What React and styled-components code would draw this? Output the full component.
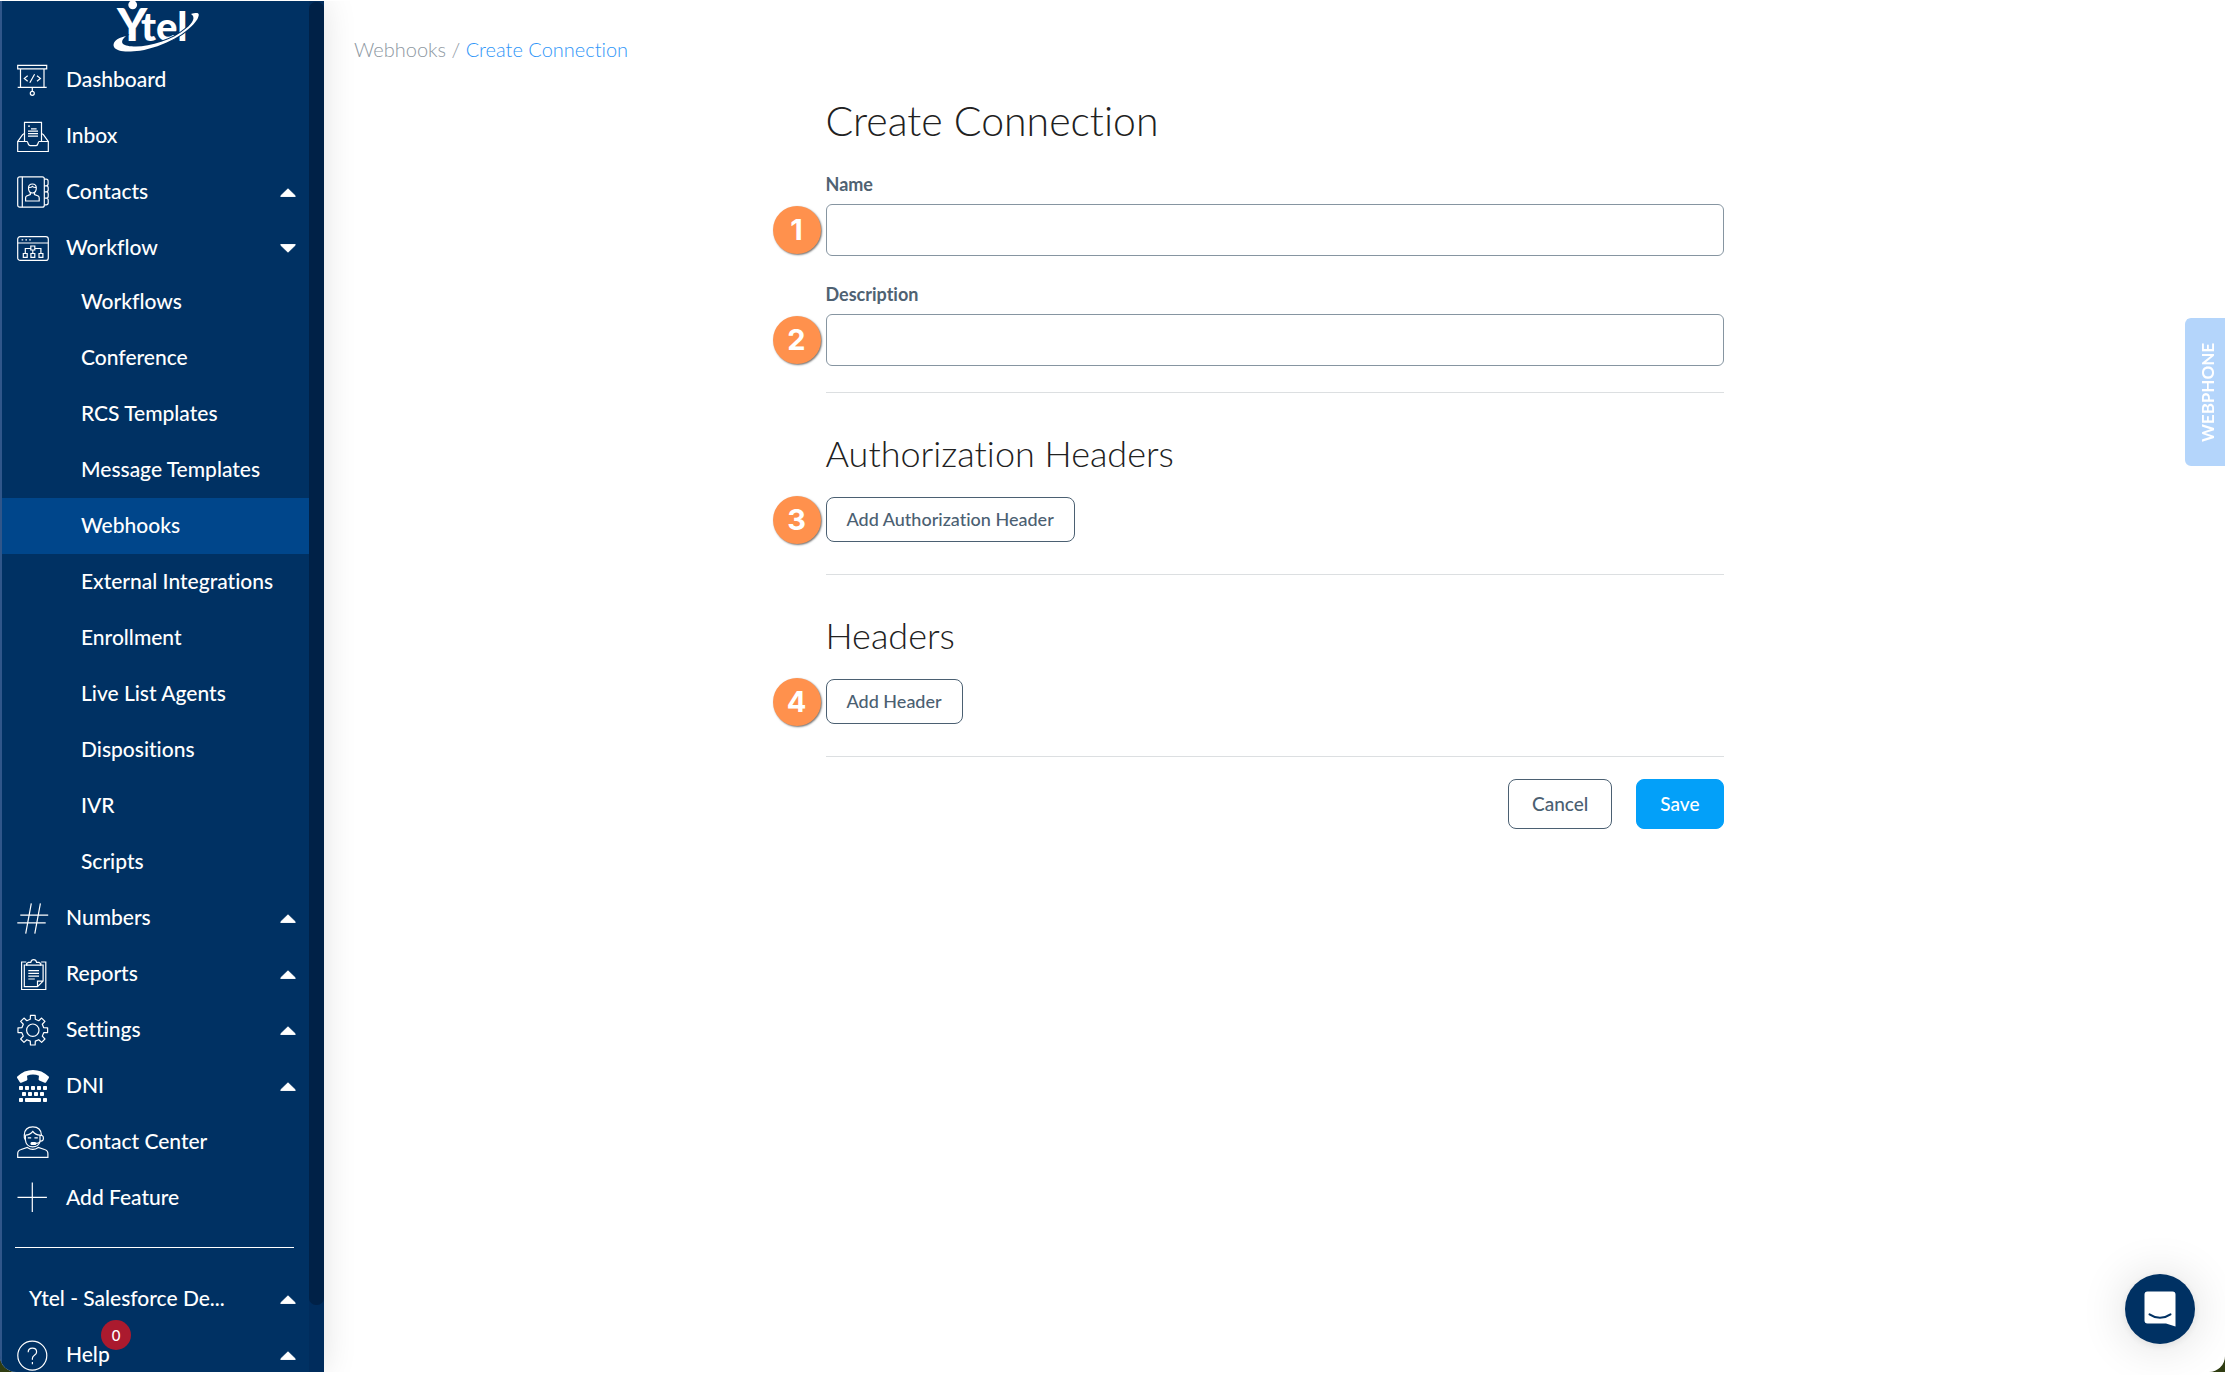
import { FaTty } from "react-icons/fa";
import styled, { createGlobalStyle } from "styled-components";

const GlobalStyle = createGlobalStyle`
  * {
    box-sizing: border-box;
  }

  body {
    margin: 0;
    background: #fff;
    font-family: Lato, "Liberation Sans", sans-serif;
    font-variant-ligatures: none;
  }

  button,
  input {
    font-family: inherit;
    font-variant-ligatures: inherit;
  }
`;

const Page = styled.div`
  height: 100vh;
  padding: 1px 0 3px;
`;

const Backdrop = styled.div`
  height: 100%;
  background: linear-gradient(to bottom, #fff 50%, #2f3d12 50%);
`;

const Window = styled.div`
  display: flex;
  height: 100%;
  overflow: hidden;
  background: #fff;
  border-radius: 0 0 16px 16px;
`;

const Sidebar = styled.aside`
  position: relative;
  z-index: 1;
  display: flex;
  flex: none;
  width: 324px;
  background: #003163;
  box-shadow: 0 0 32px rgba(0, 0, 0, 0.12);
`;

const Menu = styled.nav`
  flex: 1;
  overflow: hidden;
  border-left: 2px solid #30568a;
`;

const ScrollTrack = styled.div`
  width: 15px;
  padding: 1px 0 67px;
  background: #002c5c;
`;

const ScrollThumb = styled.div`
  height: 100%;
  border-radius: 7px;
  background: #002147;
`;

const Logo = styled.svg`
  display: block;
  width: 86px;
  height: 51px;
  margin: 0 auto;
  overflow: visible;
`;

const MenuItem = styled.button`
  position: relative;
  display: flex;
  align-items: center;
  gap: 17px;
  width: 100%;
  height: 56px;
  padding: 0 13px 0 ${(props) => (props.$plain ? "27px" : "15px")};
  border: 0;
  background: none;
  color: #fff;
  font-size: 21px;
  font-weight: 500;
  line-height: 28px;
  text-align: left;
`;

const MenuText = styled.span`
  flex: 1;
  padding-bottom: 2px;
`;

const SubMenu = styled.div`
  display: flex;
  flex-direction: column;
  margin-top: -2px;
`;

const SubItem = styled.a`
  padding: 13px 0 15px 79px;
  background: ${(props) => (props.$active ? "#00468b" : "transparent")};
  color: #fff;
  font-size: 21px;
  font-weight: 500;
  line-height: 28px;
  text-decoration: none;
`;

const MenuDivider = styled.hr`
  height: 1px;
  margin: 21px 15px 23px 13px;
  border: 0;
  background: #fff;
`;

const Counter = styled.span`
  position: absolute;
  top: -7px;
  left: 99px;
  width: 30px;
  height: 30px;
  border-radius: 50%;
  background: #ab1a2e;
  font-size: 15px;
  line-height: 30px;
  text-align: center;
`;

const Icon = styled.svg`
  flex: none;
  width: 32px;
  height: 32px;
  fill: none;
  stroke: #fff;
  stroke-width: 1.2;
`;

const TtyIcon = styled(FaTty)`
  flex: none;
  width: 32px;
  height: 32px;
`;

const Caret = styled.svg`
  width: 16px;
  height: 9px;
  fill: #fff;
  stroke: #fff;
  stroke-linejoin: round;
  transform: ${(props) => (props.$open ? "rotate(180deg)" : "none")};
`;

const Main = styled.main`
  flex: 1;
  padding: 33px 30px;
`;

const Breadcrumb = styled.div`
  color: #8d979f;
  font-size: 20px;
  font-weight: 300;
  line-height: 30px;

  a {
    color: inherit;
    text-decoration: none;
  }

  a:last-child {
    color: #2f96f8;
  }
`;

const Form = styled.form`
  max-width: 898px;
  margin: 32px auto 0;
`;

const Title = styled.h1`
  margin: 0 0 26px;
  color: #212121;
  font-size: 41px;
  font-weight: 300;
  line-height: 50px;
`;

const Field = styled.div`
  margin-bottom: 26px;
`;

const Label = styled.label`
  display: block;
  margin-bottom: 8px;
  color: #4f6272;
  font-size: 18px;
  font-weight: 700;
  line-height: 24px;
`;

const Marked = styled.div`
  position: relative;
  width: 100%;
`;

const Input = styled.input`
  display: block;
  width: 100%;
  height: 52px;
  padding: 0 16px;
  border: 1px solid #8695a1;
  border-radius: 6px;
  background: #fff;
  font-size: 18px;
`;

const Marker = styled.span`
  position: absolute;
  top: 50%;
  left: -53px;
  width: 48px;
  height: 48px;
  margin-top: -24px;
  border-radius: 50%;
  background: #ff914d;
  box-shadow: 1px 1px 2px rgba(0, 0, 0, 0.55);
  color: #fff;
  font-family: Inter, "Liberation Sans", sans-serif;
  font-size: 29px;
  font-weight: 700;
  line-height: 48px;
  text-align: center;
`;

const Section = styled.section`
  padding: 39px 0 32px;
  border-top: 1px solid #dcdfe1;
`;

const SectionTitle = styled.h2`
  margin: 0 0 23px;
  color: #212121;
  font-size: 36px;
  font-weight: 300;
  line-height: 42px;
`;

const Button = styled.button`
  display: block;
  height: ${(props) => (props.$large ? "50px" : "45px")};
  padding: 0 ${(props) => (props.$large ? "23px" : "20px")} 1px;
  border: 1px solid ${(props) => (props.$primary ? "#03a0f9" : "#4b6072")};
  border-radius: 8px;
  background: ${(props) => (props.$primary ? "#03a0f9" : "#fff")};
  color: ${(props) => (props.$primary ? "#fff" : "#4b6072")};
  font-size: ${(props) => (props.$large ? "19px" : "18px")};
  font-weight: 500;
  line-height: 24px;
`;

const Footer = styled.footer`
  display: flex;
  justify-content: flex-end;
  gap: 24px;
  padding-top: 22px;
  border-top: 1px solid #dcdfe1;
`;

const WebphoneTab = styled.button`
  position: fixed;
  top: 318px;
  right: 0;
  width: 40px;
  height: 148px;
  padding: 0 6px 0 0;
  border: 0;
  border-radius: 0 6px 6px 0;
  background: #b4d5fb;
  color: #fff;
  font-size: 17px;
  font-weight: 700;
  line-height: 34px;
  writing-mode: vertical-rl;
  transform: rotate(180deg);
`;

const ChatButton = styled.button`
  position: fixed;
  right: 30px;
  bottom: 31px;
  display: flex;
  align-items: center;
  justify-content: center;
  width: 70px;
  height: 70px;
  padding: 0;
  border: 0;
  border-radius: 50%;
  background: #003163;
  box-shadow: 0 2px 8px rgba(0, 0, 0, 0.08), 0 2px 48px rgba(0, 0, 0, 0.14);
`;

const gearPath = (cx, cy) => {
  const points = [];
  for (let i = 0; i < 8; i++) {
    [
      [11.2, -13],
      [15, -9],
      [15, 9],
      [11.2, 13],
    ].forEach(([r, offset]) => {
      const angle = ((i * 45 + offset) * Math.PI) / 180;
      points.push(`${(cx + r * Math.cos(angle)).toFixed(2)} ${(cy + r * Math.sin(angle)).toFixed(2)}`);
    });
  }
  return `M${points.join("L")}Z`;
};

const icons = {
  dashboard: (
    <Icon viewBox="0 0 32 32">
      <path d="M.7 1.3h29v3.6H.7zM3.5 5v18.4M27 5v18.4M.7 23.4h29M15.3 23.4v4" />
      <circle cx="15.3" cy="29.3" r="2" />
      <path d="M10.7 11.7 7.3 14.4l3.4 2.8M20 11.7l3.4 2.7-3.4 2.8M17.6 10.3l-4.8 8.4" />
    </Icon>
  ),
  inbox: (
    <Icon viewBox="0 0 32 32">
      <path d="M7.5 21.4V2.4h17v19M7.4 13.4 5.6 14.6.8 21.4M24.6 13.4l1.8 1.2 4.8 6.8" />
      <path d="M.7 21.5h9.4c1 0 .6 4.2 3.2 4.2h5.6c2.6 0 2-4.2 3.2-4.2h9.2v10H.7z" />
      <path d="M11 6.2h2M14 8.8h5.6M11 11.2h10M11 13.7h10M11 16.2h10" />
    </Icon>
  ),
  contacts: (
    <Icon viewBox="0 0 32 32">
      <rect x=".7" y=".8" width="26.6" height="30.4" rx="2" />
      <path d="M5.3.8v30.4M27.3 3.2h1.8q2 0 2 2v2.6q0 2-2 2h-1.8M29.2 9.8q2 0 2 2v2q0 2-2 2h-1.8M29.2 15.8q2 0 2 2v2.4q0 2-2 2h-1.8M29.2 22.2q2 0 2 2v2.6q0 2-2 2h-1.8" />
      <path d="M11.5 12q0-4 3.9-4t3.9 4q0 5-3.9 5t-3.9-5zM11.6 11.4q2.4.4 3.8-1 1.6 1.4 3.8 1M13.3 16.5v2L9.6 20q-1 .6-1 2v3h13.6v-3q0-1.4-1-2l-3.7-1.5v-2" />
    </Icon>
  ),
  workflow: (
    <Icon viewBox="0 0 32 32">
      <rect x=".7" y="4.6" width="30.6" height="23.8" rx="2.5" />
      <path d="M.7 11h30.6M4.6 7.8h1.6M8.4 7.8H10M12.2 7.8h1.6" />
      <path d="M13.8 14h4v4h-4zM6.3 21.5h3.9v3.9H6.3zM13.9 21.5h3.9v3.9h-3.9zM22 21.5h3.9v3.9H22zM13.8 16.5H8.3v5M17.8 16.5h6.1v5M15.8 18v3.5" />
    </Icon>
  ),
  numbers: (
    <Icon viewBox="0 0 32 32">
      <path d="M3.3 13.2h27.9M.3 20.8h28.4M14.3 1.3 8.7 31.7M23.4 1.3l-5.6 30.4" />
    </Icon>
  ),
  reports: (
    <Icon viewBox="0 0 32 32">
      <path d="M9.3 4H4.6v27.5h24.2V4h-4.7" />
      <path d="M10.5 7H7.3v21.7h13.2l5.6-5.6V7h-3.2M20.5 28.7v-5.6h5.6" />
      <path d="M9.6 7.2V5.6l1.8-1.2h2.4q.6-2.8 2.9-2.8t2.9 2.8H22l1.8 1.2v1.6z" />
      <path d="M11.3 12.6H22M11.3 15.4H22M11.3 18.2H22M11.3 21h6.5" />
    </Icon>
  ),
  settings: (
    <Icon viewBox="0 0 32 32">
      <path d={gearPath(15.8, 16.2)} strokeLinejoin="round" />
      <circle cx="15.8" cy="16.2" r="6.2" />
    </Icon>
  ),
  dni: <TtyIcon />,
  contactCenter: (
    <Icon viewBox="0 0 32 32">
      <path d="M.7 31.3v-3.6q0-3.2 3.4-4.2l6.2-2.1q2.8 2 5.5 2t5.5-2l6.2 2.1q3.4 1 3.4 4.2v3.6z" />
      <path d="M8.3 13.5q-1.4-1-1-4.5Q7.6.9 15.8.9t8.6 8.1M8.3 13.5q.8 7.4 7.5 7.4 5.5 0 7.2-5" />
      <path d="M8.4 9.2q4.6-.2 7.4-3.8 2.6 3.6 7.2 3.8v6.5M8.4 9.2v5M23.2 9.5q3.2-.6 3.2 2.7t-3.2 2.8M10.8 11.8h3.4M17.4 11.8h3.4M23 15.5q-1 1.9-4.2 1.9" />
      <rect x="14" y="16.5" width="4.8" height="1.8" rx=".9" fill="#fff" />
    </Icon>
  ),
  plus: (
    <Icon viewBox="0 0 32 32">
      <path d="M.5 15.3h29.4M15.3.5v29.4" />
    </Icon>
  ),
  help: (
    <Icon viewBox="0 0 32 32">
      <circle cx="15.3" cy="16.6" r="14.5" />
      <path d="M11.2 13.2q0-4 4.2-4t4.2 3.7q0 2-2.2 3.4-2 1.3-2 3.3v1.2M15.4 23v2.2" />
    </Icon>
  ),
};

const topItems = [
  { label: "Dashboard", icon: "dashboard" },
  { label: "Inbox", icon: "inbox" },
  { label: "Contacts", icon: "contacts", caret: true },
  { label: "Workflow", icon: "workflow", caret: true, open: true },
];

const workflowItems = [
  "Workflows",
  "Conference",
  "RCS Templates",
  "Message Templates",
  "Webhooks",
  "External Integrations",
  "Enrollment",
  "Live List Agents",
  "Dispositions",
  "IVR",
  "Scripts",
];

const bottomItems = [
  { label: "Numbers", icon: "numbers", caret: true },
  { label: "Reports", icon: "reports", caret: true },
  { label: "Settings", icon: "settings", caret: true },
  { label: "DNI", icon: "dni", caret: true },
  { label: "Contact Center", icon: "contactCenter" },
  { label: "Add Feature", icon: "plus" },
];

function MenuRow({ item }) {
  return (
    <MenuItem type="button" $plain={!item.icon}>
      {item.icon && icons[item.icon]}
      <MenuText>{item.label}</MenuText>
      {item.caret && (
        <Caret viewBox="0 0 16 9" $open={item.open}>
          <path d="M8 .8 15.2 7.8v.6H.8v-.6z" />
        </Caret>
      )}
      {item.count !== undefined && <Counter>{item.count}</Counter>}
    </MenuItem>
  );
}

function YtelLogo() {
  return (
    <Logo viewBox="0 0 86 51" fill="#fff" fontFamily="Lato, sans-serif" fontWeight="900">
      <circle cx="19.7" cy="3.8" r="4.4" />
      <text x="4" y="39.5" fontSize="46">
        Y
        <tspan x="28" fontSize="40">
          tel
        </tspan>
      </text>
      <path
        d="M13 35C3 37-1 42 1 46c3 5 13 5 26 3.7C50 46 76 32 84.5 18 88 11 84 11.5 78 13c5 3 2 9-5 14.5C60 39 37 45.500 23 45.500 10 45.500 5 42 13 35z"
        stroke="#003163"
        strokeWidth="2"
        paintOrder="stroke"
      />
    </Logo>
  );
}

export default function App() {
  return (
    <Page>
      <GlobalStyle />
      <Backdrop>
        <Window>
          <Sidebar>
            <Menu>
              <YtelLogo />
              {topItems.map((item) => (
                <MenuRow key={item.label} item={item} />
              ))}
              <SubMenu>
                {workflowItems.map((label) => (
                  <SubItem key={label} href="#" $active={label === "Webhooks"}>
                    {label}
                  </SubItem>
                ))}
              </SubMenu>
              {bottomItems.map((item) => (
                <MenuRow key={item.label} item={item} />
              ))}
              <MenuDivider />
              <MenuRow item={{ label: "Ytel - Salesforce De...", caret: true }} />
              <MenuRow item={{ label: "Help", icon: "help", caret: true, count: 0 }} />
            </Menu>
            <ScrollTrack>
              <ScrollThumb />
            </ScrollTrack>
          </Sidebar>

          <Main>
            <Breadcrumb>
              <a href="#">Webhooks</a> / <a href="#">Create Connection</a>
            </Breadcrumb>
            <Form>
              <Title>Create Connection</Title>
              <Field>
                <Label htmlFor="name">Name</Label>
                <Marked>
                  <Input id="name" type="text" />
                  <Marker>1</Marker>
                </Marked>
              </Field>
              <Field>
                <Label htmlFor="description">Description</Label>
                <Marked>
                  <Input id="description" type="text" />
                  <Marker>2</Marker>
                </Marked>
              </Field>
              <Section>
                <SectionTitle>Authorization Headers</SectionTitle>
                <Marked>
                  <Button type="button">Add Authorization Header</Button>
                  <Marker>3</Marker>
                </Marked>
              </Section>
              <Section>
                <SectionTitle>Headers</SectionTitle>
                <Marked>
                  <Button type="button">Add Header</Button>
                  <Marker>4</Marker>
                </Marked>
              </Section>
              <Footer>
                <Button type="button" $large>
                  Cancel
                </Button>
                <Button type="submit" $large $primary>
                  Save
                </Button>
              </Footer>
            </Form>
          </Main>
        </Window>
      </Backdrop>
      <WebphoneTab type="button">WEBPHONE</WebphoneTab>
      <ChatButton type="button" aria-label="Open chat">
        <svg width="32" height="36" viewBox="0 0 32 36">
          <path d="M3.5.5h25q3 0 3 3v32L22 32.5H3.5q-3 0-3-3v-26q0-3 3-3z" fill="#fff" />
          <path d="M5.5 23.3q10.5 7 21 0" fill="none" stroke="#003163" strokeWidth="2" strokeLinecap="round" />
        </svg>
      </ChatButton>
    </Page>
  );
}
